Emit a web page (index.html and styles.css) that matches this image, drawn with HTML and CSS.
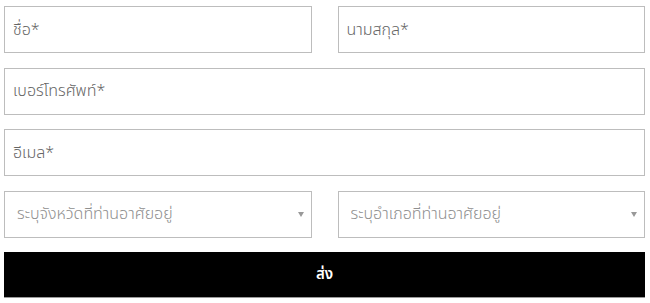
FILE: index.html
```html
<!DOCTYPE html>
<html lang="th">
<head>
    <meta charset="UTF-8">
    <meta name="viewport" content="width=device-width, initial-scale=1.0">
    <title>ติดต่อเรา</title>
    <link rel="stylesheet" href="styles.css">
</head>
<body>

    <form class="contact-form" onsubmit="return false">
        <div class="row two-col">
            <input type="text" class="field" placeholder="ชื่อ*">
            <input type="text" class="field" placeholder="นามสกุล*">
        </div>

        <div class="row">
            <input type="tel" class="field" placeholder="เบอร์โทรศัพท์*">
        </div>

        <div class="row">
            <input type="email" class="field" placeholder="อีเมล*">
        </div>

        <div class="row two-col">
            <div class="select-wrap">
                <select class="field select">
                    <option>ระบุจังหวัดที่ท่านอาศัยอยู่</option>
                </select>
                <span class="arrow"></span>
            </div>
            <div class="select-wrap">
                <select class="field select">
                    <option>ระบุอำเภอที่ท่านอาศัยอยู่</option>
                </select>
                <span class="arrow"></span>
            </div>
        </div>

        <button type="submit" class="submit-btn">ส่ง</button>
    </form>

</body>
</html>
```

FILE: styles.css
```css
* {
    margin: 0;
    padding: 0;
    box-sizing: border-box;
    font-family: "Noto Sans Thai", "Noto Sans", "DejaVu Sans", sans-serif;
}

body {
    background-color: #ffffff;
    padding: 6px 5px 0 4px;
}

.contact-form {
    display: flex;
    flex-direction: column;
    gap: 14.5px;
}

.row {
    display: flex;
}

.two-col {
    gap: 26px;
}

.two-col > * {
    flex: 1;
}

.field {
    width: 100%;
    height: 47px;
    padding: 0 8px;
    border: 1px solid #bdbdbd;
    border-radius: 0;
    background: #ffffff;
    color: #666666;
    font-size: 16px;
    font-weight: 300;
    outline: none;
}

.field::placeholder {
    color: #666666;
}

.select-wrap {
    position: relative;
}

.select {
    appearance: none;
    -webkit-appearance: none;
    padding: 0 12px;
    color: #8f8f8f;
}

.arrow {
    position: absolute;
    right: 8px;
    top: 21px;
    width: 0;
    height: 0;
    border-left: 3px solid transparent;
    border-right: 3px solid transparent;
    border-top: 5px solid #999999;
}

.submit-btn {
    height: 46px;
    background: #000000;
    color: #ffffff;
    border: none;
    border-bottom: 1px solid #9a9a9a;
    font-size: 15px;
    font-weight: 600;
    cursor: pointer;
}
```
